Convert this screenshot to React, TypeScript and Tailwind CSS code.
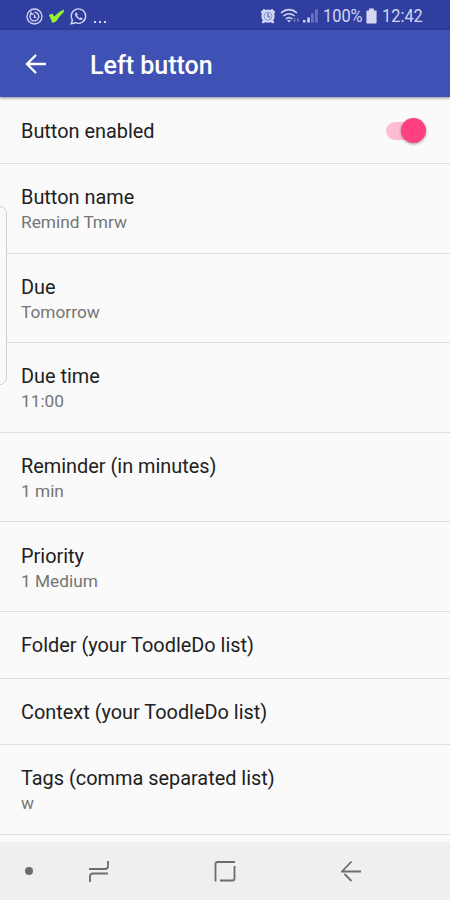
import { useState } from 'react';

type Row = { title: string; value?: string };

const rows: Row[] = [
  { title: 'Button name', value: 'Remind Tmrw' },
  { title: 'Due', value: 'Tomorrow' },
  { title: 'Due time', value: '11:00' },
  { title: 'Reminder (in minutes)', value: '1 min' },
  { title: 'Priority', value: '1 Medium' },
  { title: 'Folder (your ToodleDo list)' },
  { title: 'Context (your ToodleDo list)' },
  { title: 'Tags (comma separated list)', value: 'w' },
];

function StatusBar() {
  return (
    <div className="flex h-[30px] shrink-0 items-center bg-[#303f9f] pt-[2px] pl-[26px] text-[#d3d7f2]">
      <svg width="17" height="17" viewBox="0 0 17 17" fill="none" stroke="currentColor" strokeWidth="1.3">
        <circle cx="8.5" cy="8.5" r="7.5" />
        <path d="M5.4 5.2A4.4 4.4 0 1 0 8.5 4.1M5 3.6V6H7.6M8.5 6.8V9.4H10.3" />
      </svg>
      <svg className="ml-[5px]" width="17" height="15" viewBox="0 0 17 15">
        <path d="M0.8 6L4.3 4.4L6.2 7.6Q10 3 15.8 0.6V3Q11.4 7 8 12.6L4.2 14Q3 9.6 0.8 6Z" fill="#94f52d" />
      </svg>
      <svg className="ml-[5px]" width="18" height="17" viewBox="0 0 18 17" fill="none" stroke="currentColor" strokeWidth="1.4">
        <path d="M1.2 15.8L2.4 12A7.2 7.2 0 1 1 5.6 14.7Z" />
        <path d="M6.3 4.3L5 5.6C5 9 8.5 12.2 11.6 12.1L12.8 10.7L10.7 9.3L9.6 10.3Q7.8 9.3 7 7.6L7.8 6.5Z" fill="currentColor" stroke="none" />
      </svg>
      <div className="ml-[6px] flex gap-[3px] pt-[11px]">
        <i className="size-[2px] bg-current" />
        <i className="size-[2px] bg-current" />
        <i className="size-[2px] bg-current" />
      </div>

      <svg className="ml-auto" width="16" height="16" viewBox="0 0 16 16" fill="currentColor">
        <path d="M0.6 4L4 0.8L6 2.5L2.5 6ZM15.4 4L12 0.8L10 2.5L13.5 6ZM1.5 14.2L3.5 11.5L6 13.5L3.5 15.6ZM14.5 14.2L12.5 11.5L10 13.5L12.5 15.6Z" />
        <circle cx="8" cy="8.2" r="6.6" />
        <circle cx="8" cy="8.2" r="3.9" fill="none" stroke="#7f8aca" strokeWidth="0.9" />
        <path d="M8 5.4V8.5L10 9.5" fill="none" stroke="#4a58ac" strokeWidth="1.2" />
      </svg>
      <svg className="ml-[4px]" width="21" height="16" viewBox="0 0 21 16" fill="none" stroke="currentColor" strokeWidth="1.6">
        <path d="M1 4.8Q9 -1.5 17 4.8M3.4 8Q9 3.5 14.6 8M5.8 11Q9 8.4 12.2 11" />
        <path d="M7 12.3L9 14.6L11 12.3Z" fill="currentColor" stroke="none" />
        <path d="M14.5 10V14M18 10V14" stroke="#6875bd" />
      </svg>
      <svg className="ml-[1px]" width="17" height="16" viewBox="0 0 17 16">
        <path d="M1 12h2.5v2.5H1zM5.3 9.5h2.5v5H5.3z" fill="currentColor" />
        <path d="M9 5.5h2.8v9H9zM13 1.5h2.8v13H13z" fill="#6673bc" />
      </svg>
      <span className="ml-[4px] w-[40px] origin-left scale-x-[0.91] text-[18px] leading-none whitespace-nowrap">100%</span>
      <svg className="ml-[3px]" width="11" height="16" viewBox="0 0 11 16" fill="currentColor">
        <path d="M3 0.5H8V2.5H10Q10.6 2.5 10.6 3.2V14.6Q10.6 15.4 10 15.4H1Q.4 15.4 .4 14.6V3.2Q.4 2.5 1 2.5H3Z" />
      </svg>
      <span className="ml-[5px] w-[68px] origin-left scale-x-[0.91] text-[18px] leading-none whitespace-nowrap">12:42</span>
    </div>
  );
}

export default function App() {
  const [enabled, setEnabled] = useState(true);

  return (
    <div className="relative flex h-[900px] w-[450px] flex-col overflow-hidden bg-[#fafafa] font-[Roboto,sans-serif]">
      <StatusBar />

      <header className="z-10 flex h-[67px] shrink-0 items-center bg-[#3f51b5] pl-[25px] text-white shadow-[0_1px_3px_rgba(0,0,0,0.45)]">
        <svg width="22" height="20" viewBox="0 0 22 20" fill="none" stroke="currentColor" strokeWidth="2.4">
          <path d="M21 10H2.5M11 1L2 10L11 19" />
        </svg>
        <h1 className="ml-[43px] pt-[3px] text-[25px] leading-none font-medium">Left button</h1>
      </header>

      <main className="min-h-0 flex-1 overflow-hidden">
        <div className="flex h-[67px] items-center justify-between border-b border-[#dedede] pt-[2px] pr-[24px] pl-[21px]">
          <span className="pt-[2px] text-[19.9px] text-[#212121]">Button enabled</span>
          <button onClick={() => setEnabled(!enabled)} className="relative h-[18px] w-[40px]">
            <span className={`absolute inset-y-0 left-0 w-[36px] rounded-full ${enabled ? 'bg-[#ffbdd2]' : 'bg-[#bdbdbd]'}`} />
            <span className={`absolute -top-[4px] size-[25px] rounded-full shadow-[0_1px_3px_rgba(0,0,0,0.4)] ${enabled ? 'right-0 bg-[#ff4081]' : '-left-[4px] bg-[#f1f1f1]'}`} />
          </button>
        </div>
        {rows.map(row => (
          <div
            key={row.title}
            className={`flex flex-col justify-center border-b border-[#dedede] pl-[21px] ${row.value ? 'h-[89.6px] pt-[3px]' : 'h-[66.6px] pt-[3px]'}`}
          >
            <div className="text-[19.9px] leading-[26px] text-[#212121]">{row.title}</div>
            {row.value && <div className="text-[17.3px] leading-[23px] text-[#757575]">{row.value}</div>}
          </div>
        ))}
      </main>

      {/* edge panel handle */}
      <div className="absolute top-[206px] -left-[10px] h-[179px] w-[17px] rounded-[7px] border border-[#cfcfcf] bg-[#fafafa]" />

      <nav className="z-10 flex h-[58px] shrink-0 items-center bg-[#efefef] pl-[25px] text-[#6c6c6c]">
        <i className="size-[8px] rounded-full bg-current" />
        <svg className="ml-[55px]" width="22" height="22" viewBox="0 0 22 22" fill="none" stroke="currentColor" strokeWidth="1.8">
          <path d="M1 9H17Q20 9 20 6V1M20 13.5H5Q2 13.5 2 16.5V22" />
        </svg>
        <svg className="ml-[104px]" width="22" height="22" viewBox="0 0 22 22" fill="none" stroke="currentColor" strokeWidth="1.8">
          <path d="M1.5 21.5V4Q1.5 2 3.5 2H21M20.5 6V18.5Q20.5 20.5 18.5 20.5H6" />
        </svg>
        <svg className="ml-[105px]" width="21" height="22" viewBox="0 0 21 22" fill="none" stroke="currentColor" strokeWidth="1.8">
          <path d="M20 11.5H1L10.5 1.5M3.5 14L10.5 21" />
        </svg>
      </nav>
    </div>
  );
}
